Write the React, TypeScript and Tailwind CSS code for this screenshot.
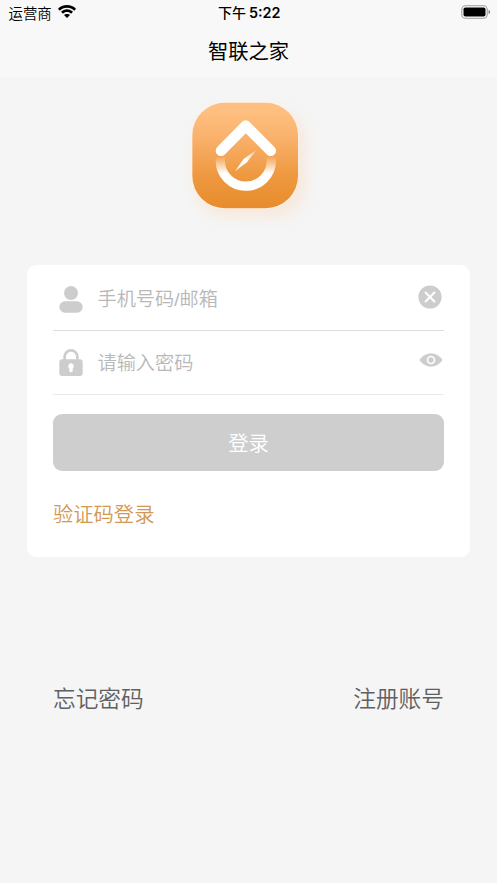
import type { ReactNode } from "react";

function StatusBar() {
  return (
    <div className="grid h-[25px] grid-cols-3 items-center pr-[7px] pl-[8.500px]">
      <div className="flex items-center gap-[6px] text-[14.4px] leading-[25px] font-[350]">
        <span>运营商</span>
        <svg className="-mt-[2px] h-[13px] w-[18px]" viewBox="0 0 54 39">
          <path d="M27 0C16 0 7 4 0 11l5 6C11 11 18 8 27 8s16 3 22 9l5-6C47 4 38 0 27 0Z" />
          <path d="M27 13c-7 0-13 3-18 7l6 6c3-3 7-5 12-5s9 2 12 5l6-6c-5-4-11-7-18-7Z" />
          <path d="M27 27c-4 0-6 1-9 3l9 9 9-9c-3-2-5-3-9-3Z" />
        </svg>
      </div>
      <div className="flex items-center justify-center gap-[3px] text-[14px] leading-[25px] whitespace-nowrap">
        <span className="font-medium">下午</span>
        <span className="font-['Inter'] text-[14.400px] font-semibold">5:22</span>
      </div>
      <svg className="-mt-px h-[14px] w-[29px] justify-self-end" viewBox="0 0 29 14">
        <rect x="0.8" y="0.8" width="25.4" height="12.4" rx="3.8" fill="#fff" stroke="#999" strokeWidth="1.1" />
        <rect x="2.5" y="2.5" width="22" height="9" rx="1.8" />
        <path d="M27.6 5v4c1-.3 1.4-1.1 1.4-2s-.4-1.700-1.400-2Z" fill="#777" />
      </svg>
    </div>
  );
}

function Logo() {
  return (
    <svg className="h-[160px] w-[160px]" viewBox="0 0 480 480">
      <defs>
        <linearGradient id="tile" x1="0" y1="0" x2="0" y2="1">
          <stop offset="0.08" stopColor="#ffbf80" />
          <stop offset="0.3" stopColor="#fab36f" />
          <stop offset="0.7" stopColor="#ee983f" />
          <stop offset="1" stopColor="#e78c2d" />
        </linearGradient>
        <linearGradient id="ring" gradientUnits="userSpaceOnUse" x1="0" y1="214" x2="0" y2="265">
          <stop offset="0" stopColor="#fff" stopOpacity="0" />
          <stop offset="1" stopColor="#fff" />
        </linearGradient>
        <linearGradient id="needle" x1="1" y1="0" x2="0" y2="1">
          <stop offset="0" stopColor="#fff" stopOpacity="0.4" />
          <stop offset="0.5" stopColor="#fff" />
          <stop offset="1" stopColor="#fff" stopOpacity="0.8" />
        </linearGradient>
        <filter id="glow" x="-30%" y="-30%" width="160%" height="160%">
          <feGaussianBlur stdDeviation="20" />
        </filter>
      </defs>
      <rect x="78" y="76" width="330" height="322" rx="95" fill="#ffb97a" opacity="0.2" filter="url(#glow)" />
      <rect x="66" y="52" width="319" height="320" rx="98" fill="#fff5ec" />
      <rect x="67" y="53" width="317" height="317" rx="97" fill="url(#tile)" />
      <path d="M151 214v13a76.500 76.500 0 0 0 153 0v-13" fill="none" stroke="url(#ring)" strokeWidth="28" />
      <path d="M153 197l74-75 75 75" fill="none" stroke="#fff" strokeWidth="32" strokeLinecap="round" strokeLinejoin="round" />
      <path d="M259 195l-26 34q-3 4-6 6l-32 24 23-33q3-4 6-6Z" fill="url(#needle)" />
    </svg>
  );
}

function UserIcon() {
  return (
    <svg className="h-[27px] w-[24px]" viewBox="0 0 72 81" fill="#cdcdcd">
      <circle cx="36" cy="21" r="21" />
      <rect x="1" y="46" width="70" height="34" rx="17" />
    </svg>
  );
}

function LockIcon() {
  return (
    <svg className="h-[27px] w-[24px]" viewBox="0 0 72 81">
      <path d="M17 36V23a19 19 0 0 1 38 0v13" fill="none" stroke="#cdcdcd" strokeWidth="8" />
      <rect x="1" y="31" width="70" height="50" rx="8" fill="#cdcdcd" />
      <path d="M36 43a9 9 0 0 0-5 16v8q0 3 5 3t5-3v-8a9 9 0 0 0-5-16Z" fill="#fff" />
    </svg>
  );
}

function ClearIcon() {
  return (
    <svg className="h-[24px] w-[24px]" viewBox="0 0 24 24">
      <circle cx="12" cy="12" r="11.600" fill="#cdcdcd" />
      <path d="M7.600 7.600l8.800 8.800m0-8.800l-8.800 8.800" stroke="#fff" strokeWidth="2.100" strokeLinecap="round" />
    </svg>
  );
}

function EyeIcon() {
  return (
    <svg className="h-[14px] w-[24px]" viewBox="0 0 72 42">
      <path d="M1 21Q16 1 36 1t35 20Q56 41 36 41T1 21Z" fill="#cdcdcd" />
      <circle cx="36" cy="21" r="10.500" fill="none" stroke="#fff" strokeWidth="5" />
    </svg>
  );
}

function Field({ icon, label, action }: { icon: ReactNode; label: ReactNode; action: ReactNode }) {
  return (
    <div className="flex h-full items-center pr-[2px] pl-[5.500px]">
      {icon}
      <span className="mb-px ml-[15px] flex-1 text-[19.200px] leading-[28px] font-[350] text-[#b8b8b8]">{label}</span>
      {action}
    </div>
  );
}

export default function App() {
  return (
    <div className="flex h-[883px] w-[497px] flex-col bg-[#f5f5f5] font-['Noto_Sans_CJK_SC',sans-serif] text-black">
      <header className="h-[77px] shrink-0 bg-[#f8f8f8]">
        <StatusBar />
        <h1 className="text-center text-[20.300px] leading-[50px]">智联之家</h1>
      </header>

      <div className="mt-2 flex justify-center pl-[3px]">
        <Logo />
      </div>

      <main className="mx-[27px] mt-[20px] h-[292px] shrink-0 rounded-[9px] bg-white px-[26px]">
        <div className="h-[66px] border-b border-[#dedede] pt-[4px]">
          <Field
            icon={<UserIcon />}
            label={<>手机号码<span className="font-['Liberation_Sans']">/</span>邮箱</>}
            action={<div className="pb-[6px]"><ClearIcon /></div>}
          />
        </div>
        <div className="h-[64px] border-b border-[#ebebeb]">
          <Field
            icon={<LockIcon />}
            label="请输入密码"
            action={<div className="-mr-px pb-[6px]"><EyeIcon /></div>}
          />
        </div>
        <button className="mt-[19px] block h-[57px] w-full rounded-[9px] bg-[#cecece] text-[20.300px] leading-[57px] font-[350] text-white">
          登录
        </button>
        <a className="mt-[26px] block text-[20.300px] leading-[32px] font-[350] text-[#d29856]">验证码登录</a>
      </main>

      <footer className="mt-[121px] flex justify-between px-[53px] text-[22.700px] leading-[40px] font-[350] text-[#606060]">
        <span>忘记密码</span>
        <span>注册账号</span>
      </footer>
    </div>
  );
}
